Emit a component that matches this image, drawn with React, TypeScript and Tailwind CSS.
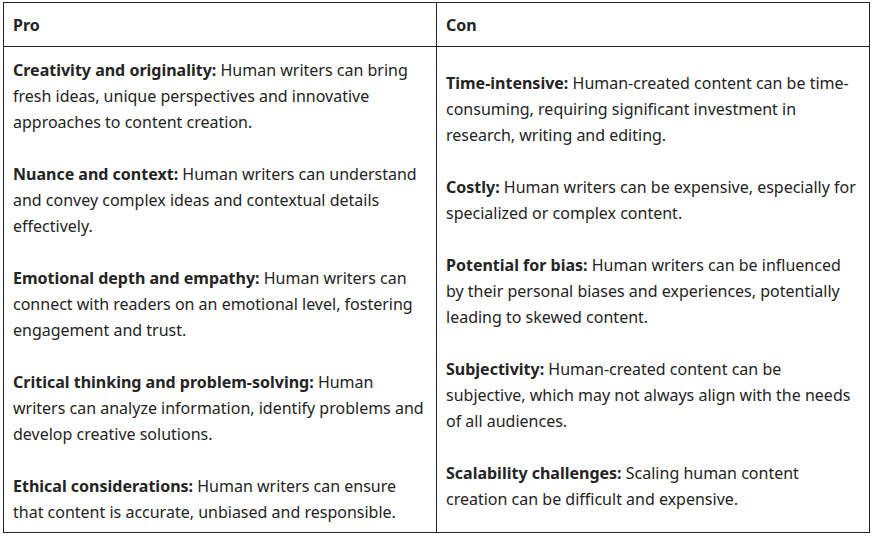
import React from 'react';

type Item = { title: string; body: string };

const pros: Item[] = [
  { title: 'Creativity and originality:', body: 'Human writers can bring fresh ideas, unique perspectives and innovative approaches to content creation.' },
  { title: 'Nuance and context:', body: 'Human writers can understand and convey complex ideas and contextual details effectively.' },
  { title: 'Emotional depth and empathy:', body: 'Human writers can connect with readers on an emotional level, fostering engagement and trust.' },
  { title: 'Critical thinking and problem-solving:', body: 'Human writers can analyze information, identify problems and develop creative solutions.' },
  { title: 'Ethical considerations:', body: 'Human writers can ensure that content is accurate, unbiased and responsible.' },
];

const cons: Item[] = [
  { title: 'Time-intensive:', body: 'Human-created content can be time-consuming, requiring significant investment in research, writing and editing.' },
  { title: 'Costly:', body: 'Human writers can be expensive, especially for specialized or complex content.' },
  { title: 'Potential for bias:', body: 'Human writers can be influenced by their personal biases and experiences, potentially leading to skewed content.' },
  { title: 'Subjectivity:', body: 'Human-created content can be subjective, which may not always align with the needs of all audiences.' },
  { title: 'Scalability challenges:', body: 'Scaling human content creation can be difficult and expensive.' },
];

const CellList = ({ items }: { items: Item[] }) => (
  <div className="flex flex-col gap-[26px]">
    {items.map((it) => (
      <p key={it.title}>
        <strong className="font-bold">{it.title}</strong> {it.body}
      </p>
    ))}
  </div>
);

export default function App() {
  return (
    <div
      className="min-h-screen bg-white pt-[2px] pl-[3px] text-[16px] leading-[26px] text-[#242424]"
      style={{ fontFamily: '"Segoe UI", "Noto Sans", "Open Sans", sans-serif' }}
    >
      <table className="w-[867px] table-fixed border-collapse border border-[#262626]">
        <thead>
          <tr>
            <th className="h-[44px] border border-[#262626] px-[9px] text-left font-bold">Pro</th>
            <th className="h-[44px] border border-[#262626] px-[9px] text-left font-bold">Con</th>
          </tr>
        </thead>
        <tbody>
          <tr>
            <td className="border border-[#262626] px-[9px] pt-[10px] pb-[7px] align-middle">
              <CellList items={pros} />
            </td>
            <td className="border border-[#262626] px-[9px] pt-[10px] pb-[7px] align-middle">
              <CellList items={cons} />
            </td>
          </tr>
        </tbody>
      </table>
    </div>
  );
}
